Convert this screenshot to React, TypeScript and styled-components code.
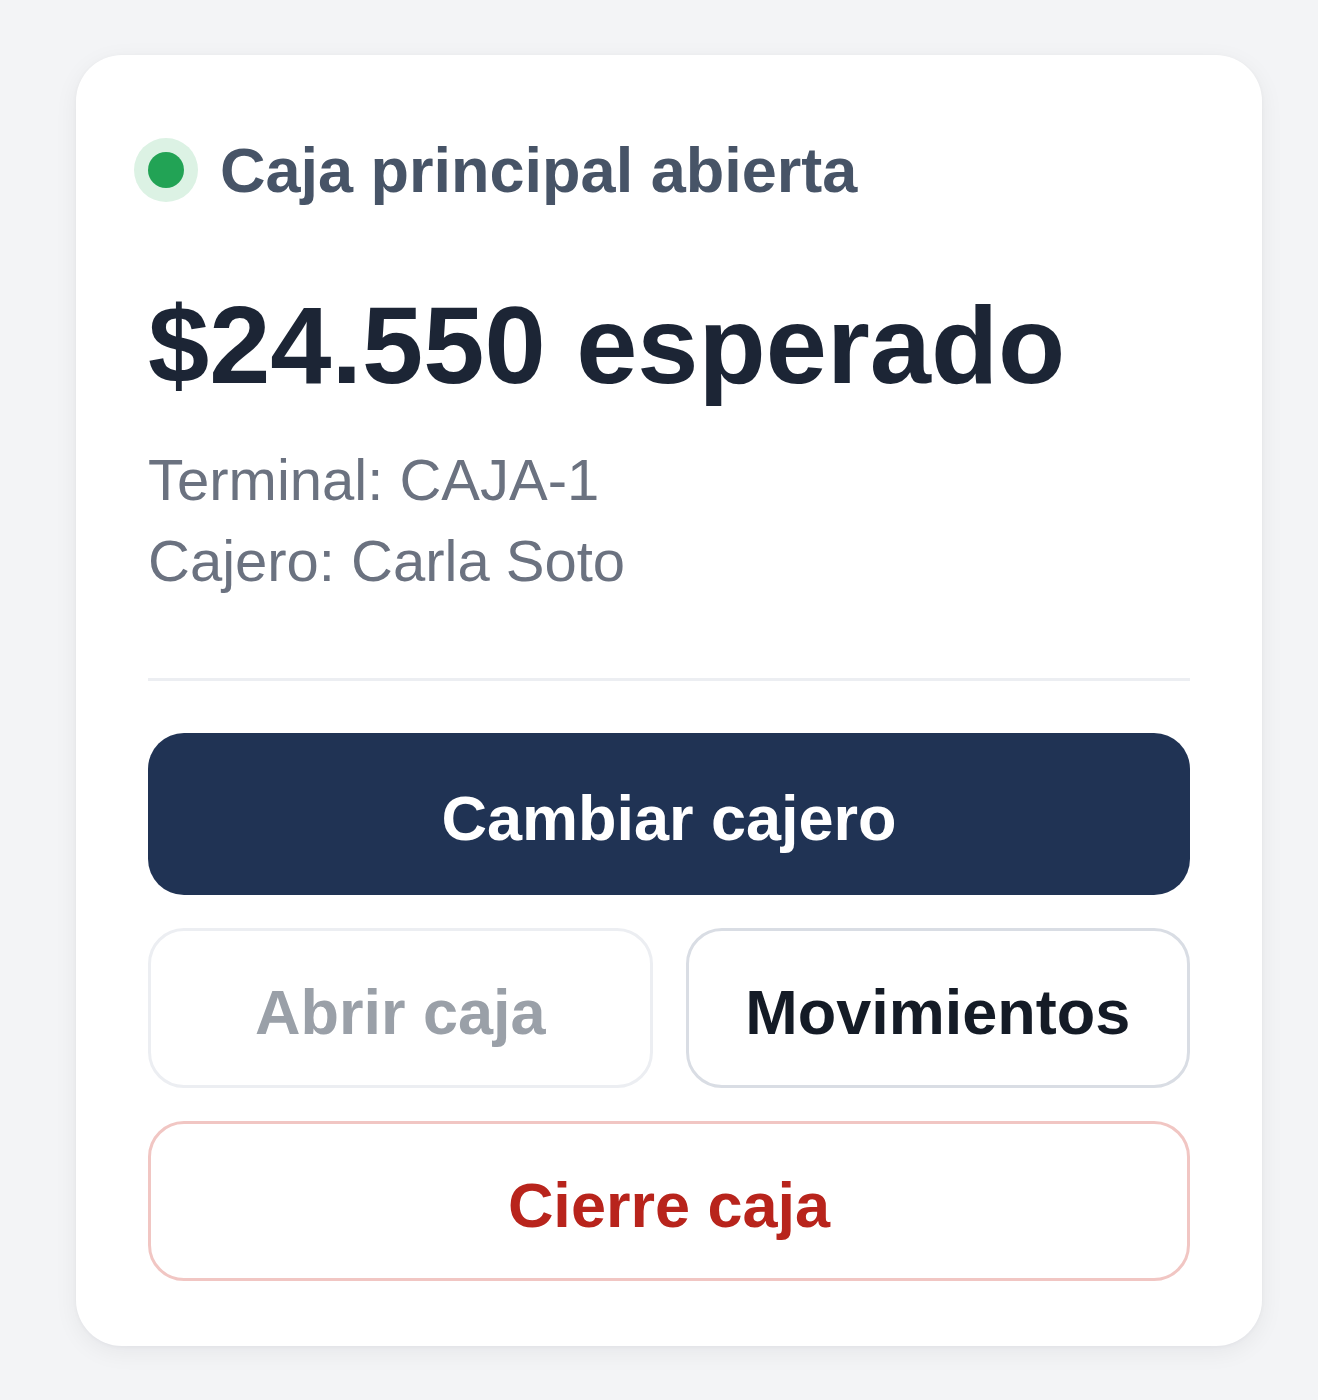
import React from "react";
import styled, { createGlobalStyle } from "styled-components";

const Global = createGlobalStyle`
  html, body { margin: 0; padding: 0; background: #f3f4f6; }
  body { font-family: "Liberation Sans", Arial, sans-serif; }
  * { box-sizing: border-box; }
`;

const Page = styled.div`
  width: 1318px;
  min-height: 1400px;
  padding: 55px 56px 0 76px;
  background: #f3f4f6;
`;

const Card = styled.div`
  width: 1186px;
  background: #ffffff;
  border-radius: 46px;
  box-shadow: 0 6px 24px rgba(17, 24, 39, 0.06), 0 1px 4px rgba(17, 24, 39, 0.04);
  padding: 83px 72px 65px 72px;
  display: flex;
  flex-direction: column;
`;

const Header = styled.div`
  display: flex;
  align-items: center;
  gap: 36px;
  height: 64px;
`;

const Dot = styled.span`
  width: 36px;
  height: 36px;
  border-radius: 50%;
  background: #22a355;
  box-shadow: 0 0 0 14px #dcf2e4;
  flex: none;
`;

const Title = styled.span`
  font-size: 63px;
  font-weight: 700;
  color: #475467;
  line-height: 1.15;
`;

const Amount = styled.div`
  margin-top: 80px;
  font-size: 110px;
  font-weight: 700;
  color: #1c2535;
  line-height: 1.15;
`;

const Info = styled.div`
  margin-top: 30px;
  display: flex;
  flex-direction: column;
`;

const InfoLine = styled.div`
  font-size: 58px;
  line-height: 81px;
  color: #6b7280;
`;

const Divider = styled.hr`
  margin: 77px 0 0 0;
  border: none;
  height: 3px;
  background: #eceef2;
`;

const Actions = styled.div`
  margin-top: 52px;
  display: flex;
  flex-direction: column;
  gap: 33px;
`;

const Row = styled.div`
  display: grid;
  grid-template-columns: 1fr 1fr;
  gap: 33px;
`;

type Variant = "primary" | "disabled" | "outline" | "danger";

const Button = styled.button<{ $variant: Variant }>`
  font-family: "Liberation Sans", Arial, sans-serif;
  font-size: 63px;
  font-weight: 700;
  height: ${(p) => (p.$variant === "primary" ? "162px" : "160px")};
  border-radius: 36px;
  display: flex;
  align-items: center;
  justify-content: center;
  cursor: pointer;
  padding: 8px 0 0 0;
  ${(p) =>
    p.$variant === "primary"
      ? `background: #203354; color: #ffffff; border: none;`
      : p.$variant === "disabled"
      ? `background: #ffffff; color: #9aa0a8; border: 3px solid #eceef2;`
      : p.$variant === "outline"
      ? `background: #ffffff; color: #141b26; border: 3px solid #d9dde4;`
      : `background: #ffffff; color: #b8241c; border: 3px solid #f1c6c3;`}
`;

export default function App() {
  return (
    <>
      <Global />
      <Page>
        <Card>
          <Header>
            <Dot />
            <Title>Caja principal abierta</Title>
          </Header>
          <Amount>$24.550 esperado</Amount>
          <Info>
            <InfoLine>Terminal: CAJA-1</InfoLine>
            <InfoLine>Cajero: Carla Soto</InfoLine>
          </Info>
          <Divider />
          <Actions>
            <Button $variant="primary">Cambiar cajero</Button>
            <Row>
              <Button $variant="disabled">Abrir caja</Button>
              <Button $variant="outline">Movimientos</Button>
            </Row>
            <Button $variant="danger">Cierre caja</Button>
          </Actions>
        </Card>
      </Page>
    </>
  );
}
